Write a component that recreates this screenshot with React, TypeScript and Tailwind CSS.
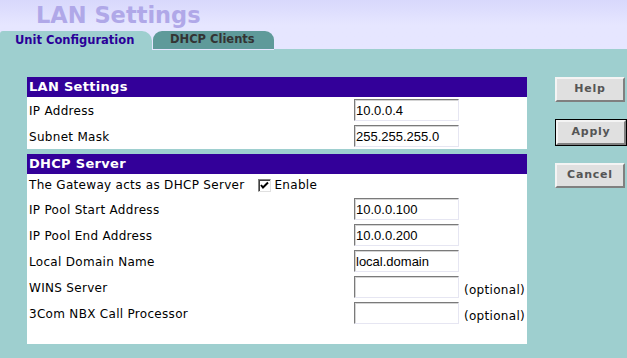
import React from "react";

const Input = ({ value }: { value: string }) => (
  <div className="w-[105px] h-[22px] bg-white border border-t-[#7a7a7a] border-l-[#7a7a7a] border-b-[#e6e6f2] border-r-[#e6e6f2] shadow-[inset_1px_1px_0_#d4d4d4] pl-[1px] pt-[1px] flex items-center font-['Liberation_Sans'] text-[13px] text-black leading-none tracking-normal">
    {value}
  </div>
);

const Btn = ({ label, def }: { label: string; def?: boolean }) => (
  <div className={def ? "border border-black" : ""}>
    <div className="w-[70px] h-[25px] bg-[#e0e0e0] border-2 border-t-[#f4f4f4] border-l-[#f4f4f4] border-b-[#808080] border-r-[#808080] flex items-center justify-center font-['DejaVu_Sans'] font-bold text-[11px] text-[#555] tracking-[0.8px]">
      {label}
    </div>
  </div>
);

const Row = ({ label, value, optional }: { label: string; value: string; optional?: boolean }) => (
  <div className="h-[26px] flex items-center">
    <div className="w-[327px] pl-[2px] pt-[2px]">{label}</div>
    <Input value={value} />
    {optional && <span className="ml-[5px] mt-[6px]">(optional)</span>}
  </div>
);

const SectionHead = ({ title }: { title: string }) => (
  <div className="h-[20px] bg-[#330099] text-white font-bold text-[13px] tracking-[0.3px] pl-[2px] flex items-center">{title}</div>
);

export default function App() {
  return (
    <div className="w-[627px] h-[358px] bg-[#9ecfcf] font-['DejaVu_Sans'] text-[12px] tracking-[0.3px] text-black overflow-hidden">
      <div className="h-[50px] bg-gradient-to-b from-[#d8d8fc] via-[#e6e6ff] to-[#e6e6ff] relative">
        <div className="absolute left-[36px] top-[1px] text-[22.5px] tracking-normal font-bold text-[#b0a8e8] leading-[28px]">LAN Settings</div>
        <div className="absolute left-0 bottom-0 flex items-end tracking-normal">
          <div className="w-[152px] h-[19px] bg-[#9ecfcf] rounded-tl-[3px] rounded-tr-[10px] flex items-center pl-[15px] font-bold text-[11.5px] text-[#2a0099]">
            Unit Configuration
          </div>
          <div className="ml-[1px] w-[121px] h-[18px] mb-[1px] bg-[#5f9a9a] rounded-tl-[9px] rounded-tr-[9px] flex items-center pl-[17px] font-bold text-[11.5px] text-[#333]">
            DHCP Clients
          </div>
        </div>
        <div className="absolute left-[274px] right-0 bottom-0 h-[1px] bg-[#9ecfcf]" />
      </div>
      <div className="flex pl-[27px] pt-[27px]">
        <div className="w-[500px]">
          <div className="bg-white">
            <SectionHead title="LAN Settings" />
            <Row label="IP Address" value="10.0.0.4" />
            <Row label="Subnet Mask" value="255.255.255.0" />
          </div>
          <div className="h-[5px]" />
          <div className="bg-white pb-[18px]">
            <SectionHead title="DHCP Server" />
            <div className="h-[21px] flex items-center pl-[2px] pt-[1px]">
              <span>The Gateway acts as DHCP Server</span>
              <span className="ml-[14px] w-[13px] h-[13px] border border-t-[#808080] border-l-[#808080] border-b-[#e0e0e0] border-r-[#e0e0e0] bg-white shadow-[inset_1px_1px_0_#404040] flex items-center justify-center">
                <svg width="9" height="9" viewBox="0 0 9 9">
                  <path d="M1 4 L3 6.5 L8 1.5" stroke="#000" strokeWidth="2" fill="none" />
                </svg>
              </span>
              <span className="ml-[3px]">Enable</span>
            </div>
            <div className="h-[1px]" />
            <Row label="IP Pool Start Address" value="10.0.0.100" />
            <Row label="IP Pool End Address" value="10.0.0.200" />
            <Row label="Local Domain Name" value="local.domain" />
            <Row label="WINS Server" value="" optional />
            <Row label="3Com NBX Call Processor" value="" optional />
          </div>
        </div>
        <div className="ml-[28px] flex flex-col">
          <Btn label="Help" />
          <div className="h-[17px]" />
          <Btn label="Apply" def />
          <div className="h-[17px]" />
          <Btn label="Cancel" />
        </div>
      </div>
    </div>
  );
}
